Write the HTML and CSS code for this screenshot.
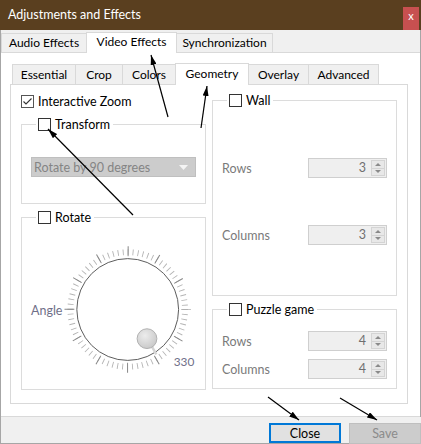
FILE: index.html
```html
<!DOCTYPE html>
<html lang="en">
<head>
    <meta charset="UTF-8">
    <title>Adjustments and Effects</title>
    <link rel="stylesheet" href="styles.css">
</head>
<body>
<div class="window">
    <div class="titlebar">
        <span class="title">Adjustments and Effects</span>
        <span class="close-x">x</span>
    </div>

    <!-- Top level tabs -->
    <div class="tabbar outer-bar">
        <div class="tab tab-audio">Audio Effects</div>
        <div class="tab tab-video selected">Video Effects</div>
        <div class="tab tab-sync">Synchronization</div>
    </div>

    <div class="outer-pane">
        <div class="tabbar inner-bar">
            <div class="tab tab-essential">Essential</div>
            <div class="tab tab-crop">Crop</div>
            <div class="tab tab-colors">Colors</div>
            <div class="tab tab-geometry selected">Geometry</div>
            <div class="tab tab-overlay">Overlay</div>
            <div class="tab tab-advanced">Advanced</div>
        </div>

        <div class="inner-pane">
            <div class="column">
                <label class="check zoom-check"><span class="box checked"><svg width="11" height="11" viewBox="0 0 11 11"><path d="M1.5 5.5 L4 8 L9.5 2.5" fill="none" stroke="#333" stroke-width="1.1"/></svg></span>Interactive Zoom</label>

                <fieldset class="group transform-group">
                    <legend><label class="check"><span class="box"></span>Transform</label></legend>
                    <div class="combo">
                        <span>Rotate by 90 degrees</span>
                        <svg width="9" height="5" viewBox="0 0 9 5"><path d="M0 0 L9 0 L4.5 5 z" fill="#f4f4f4"/></svg>
                    </div>
                </fieldset>

                <fieldset class="group rotate-group">
                    <legend><label class="check"><span class="box"></span>Rotate</label></legend>
                    <div class="dial-row">
                        <span class="angle-label">Angle</span>
                        <svg class="dial" width="135" height="130" viewBox="0 0 135 130">
                            <!-- small notches every 5 degrees -->
                            <circle cx="65.5" cy="64.5" r="58" fill="none" stroke="#b4b4b4" stroke-width="6" stroke-dasharray="0.9 4.161" stroke-dashoffset="0.45"/>
                            <!-- big notches every 30 degrees -->
                            <circle cx="65.5" cy="64.5" r="59" fill="none" stroke="#888" stroke-width="10" stroke-dasharray="1 29.89" stroke-dashoffset="0.5"/>
                            <circle cx="65.5" cy="64.5" r="51.5" fill="#fff" stroke="#5a5a5a" stroke-width="1"/>
                            <defs>
                                <radialGradient id="knob" cx="0.4" cy="0.35" r="0.7">
                                    <stop offset="0" stop-color="#ececec"/>
                                    <stop offset="1" stop-color="#c8c8c8"/>
                                </radialGradient>
                            </defs>
                            <line x1="90" y1="102" x2="94.5" y2="110" stroke="#d4d4d4" stroke-width="2.5"/>
                            <circle cx="85" cy="94" r="10" fill="url(#knob)" stroke="#b0b0b0" stroke-width="1"/>
                            <text x="112" y="122" class="dial-value">330</text>
                        </svg>
                    </div>
                </fieldset>
            </div>

            <div class="column">
                <fieldset class="group wall-group">
                    <legend><label class="check"><span class="box"></span>Wall</label></legend>
                    <div class="spin-row">
                        <span class="spin-label">Rows</span>
                        <div class="spin"><span class="spin-value">3</span><span class="spin-btns"><span class="up"></span><span class="down"></span></span></div>
                    </div>
                    <div class="spin-row wall-gap">
                        <span class="spin-label">Columns</span>
                        <div class="spin"><span class="spin-value">3</span><span class="spin-btns"><span class="up"></span><span class="down"></span></span></div>
                    </div>
                </fieldset>

                <fieldset class="group puzzle-group">
                    <legend><label class="check"><span class="box"></span>Puzzle game</label></legend>
                    <div class="spin-row">
                        <span class="spin-label">Rows</span>
                        <div class="spin"><span class="spin-value">4</span><span class="spin-btns"><span class="up"></span><span class="down"></span></span></div>
                    </div>
                    <div class="spin-row puzzle-gap">
                        <span class="spin-label">Columns</span>
                        <div class="spin"><span class="spin-value">4</span><span class="spin-btns"><span class="up"></span><span class="down"></span></span></div>
                    </div>
                </fieldset>
            </div>
        </div>
    </div>

    <div class="button-bar">
        <button type="button" class="btn btn-close">Close</button>
        <button type="button" class="btn btn-save" disabled>Save</button>
    </div>

    <!-- annotation arrows drawn over the dialog -->
    <svg class="arrows" width="421" height="444" viewBox="0 0 421 444">
        <defs>
            <marker id="head" viewBox="0 0 10 6" refX="10" refY="3" markerWidth="10" markerHeight="6" orient="auto" markerUnits="userSpaceOnUse">
                <path d="M0 0 L10 3 L0 6 z" fill="#000"/>
            </marker>
        </defs>
        <line x1="168" y1="117" x2="151" y2="55" marker-end="url(#head)"/>
        <line x1="201" y1="128" x2="207" y2="86" marker-end="url(#head)"/>
        <line x1="133" y1="215" x2="48" y2="129" marker-end="url(#head)"/>
        <line x1="268" y1="397" x2="299" y2="420" marker-end="url(#head)"/>
        <line x1="340" y1="398" x2="377" y2="420" marker-end="url(#head)"/>
    </svg>
</div>
</body>
</html>
```

FILE: styles.css
```css
/* Dialog frame */
* {
    box-sizing: border-box;
}

body {
    margin: 0;
    font-family: "Segoe UI", Lato, "Noto Sans", sans-serif;
    font-size: 12px;
    color: #000;
}

.window {
    position: relative;
    width: 421px;
    height: 444px;
    display: flex;
    flex-direction: column;
    background: #fff;
    border: 1px solid #a6a6a6;
    border-top: none;
}

.titlebar {
    height: 30px;
    margin: 0 -1px;
    background: #5a3f1f;
    color: #fff;
    display: flex;
    justify-content: space-between;
    align-items: flex-start;
}

.title {
    padding: 7px 0 0 8px;
    font-size: 12.5px;
}

.close-x {
    margin: 7px 2px 0 0;
    width: 16px;
    height: 23px;
    background: #c75050;
    color: #fff;
    font-size: 11px;
    text-align: center;
    line-height: 18px;
}

/* Tabs */
.tabbar {
    display: flex;
    align-items: flex-end;
}

.outer-bar {
    height: 23px;
    background: #f0f0f0;
    border-bottom: 1px solid #d9d9d9;
}

.tab {
    height: 19px;
    border: 1px solid #d9d9d9;
    border-bottom: none;
    background: #f0f0f0;
    text-align: center;
    line-height: 18px;
    white-space: nowrap;
}

.tab + .tab {
    margin-left: -1px;
}

.tab.selected {
    position: relative;
    z-index: 1;
    height: 21px;
    margin-bottom: -1px;
    background: #fff;
    line-height: 18px;
}

.tab-audio { width: 86px; }
.tab-video { width: 91px; }
.tab-sync { width: 97px; }

.outer-pane {
    flex: 1;
    display: flex;
    flex-direction: column;
    padding: 10px 12px 12px 9px;
    border-bottom: 1px solid #d9d9d9;
}

.inner-bar {
    height: 21px;
    padding-left: 2px;
}

.inner-bar .tab {
    height: 20px;
    line-height: 19px;
}

.inner-bar .tab.selected {
    height: 22px;
    line-height: 19px;
}

.tab-essential { width: 64px; }
.tab-crop { width: 48px; }
.tab-colors { width: 54px; }
.tab-geometry { width: 74px; }
.tab-overlay { width: 61px; }
.tab-advanced { width: 71px; }

.inner-pane {
    flex: 1;
    border: 1px solid #d9d9d9;
    padding: 10px 10px 0;
    display: grid;
    grid-template-columns: 185px 185px;
    column-gap: 6px;
    align-items: start;
}

/* Check boxes and group boxes */
.check {
    display: flex;
    align-items: center;
    height: 13px;
    line-height: 13px;
    font-size: 12.5px;
}

.box {
    width: 13px;
    height: 13px;
    border: 1px solid #333;
    background: #fff;
    margin-right: 4px;
    display: flex;
    align-items: center;
    justify-content: center;
}

.box.checked {
    border-color: #555;
}

.group {
    margin: 0;
    padding: 0 9px;
    border: 1px solid #dcdcdc;
    min-width: 0;
}

.group legend {
    margin-left: 5px;
    padding: 0 3px 0 2px;
}

.transform-group {
    margin-top: 10px;
    padding-top: 26px;
    padding-bottom: 26px;
}

.combo {
    height: 20px;
    background: #cccccc;
    border: 1px solid #bfbfbf;
    color: #848484;
    display: flex;
    align-items: center;
    justify-content: space-between;
    padding: 0 7px 0 2px;
    font-size: 12.5px;
}

.rotate-group {
    margin-top: 7px;
    padding-top: 21px;
    padding-bottom: 14px;
}

.dial-row {
    display: flex;
    align-items: center;
}

.angle-label {
    width: 32px;
    color: #6f6f88;
    font-size: 12.5px;
}

.dial-value {
    font-family: "Segoe UI", Lato, "Noto Sans", sans-serif;
    font-size: 12px;
    fill: #6f6f88;
}

.wall-group {
    margin-top: -1px;
    padding-top: 51px;
    padding-bottom: 50px;
}

.wall-gap {
    margin-top: 47px;
}

.puzzle-group {
    margin-top: 7px;
    padding-top: 15px;
    padding-bottom: 9px;
}

.puzzle-gap {
    margin-top: 8px;
}

/* Spin boxes */
.spin-row {
    display: flex;
    align-items: center;
    justify-content: space-between;
    height: 20px;
    font-size: 12.5px;
}

.spin-label {
    color: #7a7a7a;
}

.spin {
    width: 79px;
    height: 20px;
    border: 1px solid #cfcfcf;
    background: #efefef;
    display: flex;
    padding: 1px;
}

.spin-value {
    flex: 1;
    text-align: right;
    padding-right: 5px;
    line-height: 16px;
    color: #6f6f6f;
}

.spin-btns {
    width: 14px;
    display: flex;
    flex-direction: column;
    border: 1px solid #d4d4d4;
    background: #e8e8e8;
}

.spin-btns span {
    flex: 1;
    display: flex;
    align-items: center;
    justify-content: center;
}

.spin-btns .up {
    border-bottom: 1px solid #d4d4d4;
}

.spin-btns .up::after {
    content: "";
    border: 3px solid transparent;
    border-bottom: 3px solid #8a8a8a;
    border-top: none;
}

.spin-btns .down::after {
    content: "";
    border: 3px solid transparent;
    border-top: 3px solid #8a8a8a;
    border-bottom: none;
}

/* Bottom buttons */
.button-bar {
    height: 26px;
    background: #f0f0f0;
    display: flex;
    justify-content: flex-end;
    align-items: flex-end;
    margin-right: -1px;
}

.btn {
    width: 72px;
    height: 20px;
    margin: 0;
    padding: 0;
    font-family: inherit;
    font-size: 12.5px;
}

.btn-close {
    background: #e1e1e1;
    border: 2px solid #0078d7;
    color: #000;
}

.btn-save {
    margin-left: 8px;
    margin-bottom: -1px;
    height: 21px;
    background: #cccccc;
    border: 1px solid #bfbfbf;
    color: #8b8b8b;
}

.arrows {
    position: absolute;
    left: -1px;
    top: 0;
    pointer-events: none;
}

.arrows line {
    stroke: #000;
    stroke-width: 1.2;
}
```
